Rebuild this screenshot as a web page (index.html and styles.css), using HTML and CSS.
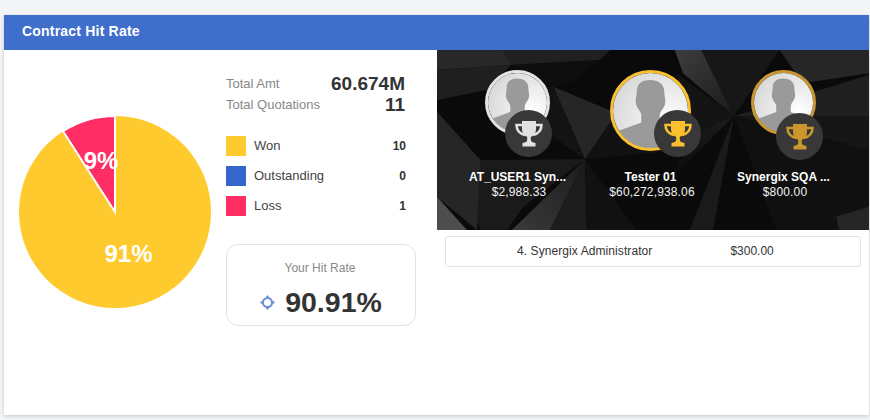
FILE: index.html
```html
<!DOCTYPE html>
<html lang="en">
<head>
<meta charset="UTF-8" />
<meta name="viewport" content="width=device-width, initial-scale=1.0"/>
<title>Contract Hit Rate</title>
<link rel="stylesheet" href="styles.css">
</head>
<body>
<svg class="defs" width="0" height="0">
  <symbol id="trophy" viewBox="0 0 28 27">
    <path d="M7 1H21V9C21 13.500 18 16 15.800 16.800V20C15.800 21.500 17.500 22.500 20.500 23V26.500H7.500V23C10.500 22.500 12.200 21.500 12.200 20V16.800C10 16 7 13.500 7 9Z" fill="currentColor"/>
    <path d="M8 5H1.500C1.500 10 4 13.500 10 15M20 5H26.500C26.500 10 24 13.500 18 15" fill="none" stroke="currentColor" stroke-width="2.500"/>
  </symbol>
  <symbol id="person" viewBox="0 0 65 65">
    <rect width="65" height="65" fill="url(#avatarbg)"/>
    <path d="M32 6C25 6 20.500 9 20.500 17C20.500 21 19 23 20 27C21 31 24 33 24.500 36V43L5 50V65H60V50L40.500 43V36C41 33 44 31 45 27C46 23 44.500 21 44.500 17C44.500 9 39 6 32 6Z" fill="#9a9a9a"/>
  </symbol>
  <defs>
    <radialGradient id="avatarbg" cx="0.75" cy="0.65" r="0.8">
      <stop offset="0" stop-color="#ffffff"/>
      <stop offset="1" stop-color="#d8d8d8"/>
    </radialGradient>
    <linearGradient id="bladeA" x1="0" y1="1" x2="1" y2="0">
      <stop offset="0" stop-color="#3a3a3a"/>
      <stop offset="1" stop-color="#1c1c1c"/>
    </linearGradient>
    <linearGradient id="bladeB" x1="0" y1="0" x2="1" y2="1">
      <stop offset="0" stop-color="#3e3e3e"/>
      <stop offset="1" stop-color="#1a1a1a"/>
    </linearGradient>
    <linearGradient id="fadeDark" x1="0" y1="0" x2="0" y2="1">
      <stop offset="0" stop-color="#1c1c1c"/>
      <stop offset="1" stop-color="#0a0a0a"/>
    </linearGradient>
  </defs>
</svg>

<div class="card">
  <header class="card-head">Contract Hit Rate</header>
  <div class="card-body">

    <div class="pie-col">
      <svg class="pie" width="192" height="192" viewBox="0 0 192 192">
        <circle cx="96" cy="96" r="96" fill="#ffca2e"/>
        <path d="M96 96L44.100 15.200A96 96 0 0 1 96 0Z" fill="#ff2d63" stroke="#fff" stroke-width="2"/>
        <text class="pie-label" x="82" y="53">9%</text>
        <text class="pie-label" x="109.500" y="146">91%</text>
      </svg>
    </div>

    <div class="stats-col">
      <div class="total-row"><span>Total Amt</span><b class="total-big">60.674M</b></div>
      <div class="total-row"><span>Total Quotations</span><b class="total-big">11</b></div>

      <div class="legend">
        <div class="legend-row"><i class="swatch won"></i><span>Won</span><b>10</b></div>
        <div class="legend-row"><i class="swatch outstanding"></i><span>Outstanding</span><b>0</b></div>
        <div class="legend-row"><i class="swatch loss"></i><span>Loss</span><b>1</b></div>
      </div>

      <div class="hit-box">
        <div class="hit-title">Your Hit Rate</div>
        <div class="hit-value">
          <svg class="hit-icon" width="15" height="15" viewBox="0 0 15 15">
            <circle cx="7.500" cy="7.500" r="4.500" fill="none" stroke="#6d8edb" stroke-width="2"/>
            <path d="M7.500 0L9.500 2.500H5.500ZM7.500 15L5.500 12.500H9.500ZM0 7.500L2.500 5.500V9.500ZM15 7.500L12.500 9.500V5.500Z" fill="#6d8edb"/>
          </svg>
          <b>90.91%</b>
        </div>
      </div>
    </div>

    <div class="rank-col">
      <div class="podium">
        <svg class="podium-bg" viewBox="0 0 1299 540" preserveAspectRatio="none">
          <rect width="1299" height="540" fill="#0a0a0a"/>
          <polygon points="0,0 200,0 222,45 0,60" fill="#282828"/>
          <polygon points="200,0 520,0 490,30 222,45" fill="#202020"/>
          <polygon points="0,60 222,45 150,120 0,150" fill="#1f1f1f"/>
          <polygon points="222,45 490,30 400,100 350,110" fill="#0e0e0e"/>
          <polygon points="350,110 540,190 445,328" fill="#262626"/>
          <polygon points="150,120 350,110 445,328" fill="#131313"/>
          <polygon points="0,185 130,330 445,328 260,470 210,540 130,540" fill="#1a1a1a"/>
          <polygon points="0,185 130,330 120,540 0,440" fill="#262626"/>
          <polygon points="0,440 90,540 0,540" fill="#4d4d4d"/>
          <polygon points="445,328 225,540 340,540" fill="url(#bladeA)"/>
          <polygon points="445,328 340,540 450,540" fill="#1c1c1c"/>
          <polygon points="445,328 450,540 600,540" fill="#111111"/>
          <polygon points="445,328 540,190 750,300" fill="#111111"/>
          <polygon points="715,0 795,0 893,198 740,70" fill="url(#bladeB)"/>
          <polygon points="795,0 1030,0 893,198" fill="#171717"/>
          <polygon points="720,70 893,198 780,250" fill="#141414"/>
          <polygon points="780,250 893,198 690,400" fill="url(#fadeDark)"/>
          <polygon points="893,198 760,540 830,540" fill="#1a1a1a"/>
          <polygon points="1030,0 1299,0 1299,70 1100,100" fill="#262626"/>
          <polygon points="893,198 1299,75 1299,200" fill="#1f1f1f"/>
          <polygon points="893,198 1299,200 1299,300" fill="#161616"/>
          <polygon points="893,198 1299,300 1299,540 1020,540" fill="#101010"/>
          <polygon points="1200,500 1299,470 1299,540 1210,540" fill="#262626"/>
        </svg>

        <div class="podium-item">
          <div class="avatar-area">
            <div class="avatar-wrap silver">
              <svg class="avatar" width="65" height="65"><use href="#person"/></svg>
              <span class="badge badge-first"><svg width="28" height="27"><use href="#trophy"/></svg></span>
            </div>
          </div>
          <div class="podium-name">AT_USER1 Syn...</div>
          <div class="podium-amt">$2,988.33</div>
        </div>

        <div class="podium-item">
          <div class="avatar-area">
            <div class="avatar-wrap gold">
              <svg class="avatar avatar-lg" width="81" height="81"><use href="#person"/></svg>
              <span class="badge badge-second"><svg width="28" height="27"><use href="#trophy"/></svg></span>
            </div>
          </div>
          <div class="podium-name">Tester 01</div>
          <div class="podium-amt">$60,272,938.06</div>
        </div>

        <div class="podium-item">
          <div class="avatar-area">
            <div class="avatar-wrap bronze">
              <svg class="avatar" width="65" height="65"><use href="#person"/></svg>
              <span class="badge badge-third"><svg width="28" height="27"><use href="#trophy"/></svg></span>
            </div>
          </div>
          <div class="podium-name">Synergix SQA ...</div>
          <div class="podium-amt">$800.00</div>
        </div>
      </div>

      <div class="rank-row">
        <span class="rank-name">4. Synergix Administrator</span>
        <span>$300.00</span>
      </div>
    </div>

  </div>
</div>
</body>
</html>
```

FILE: styles.css
```css
body {
  font-family: 'Liberation Sans', Arial, sans-serif;
  margin: 0;
  padding: 15px 1px 5px 4px;
  background-color: #f4f5f8;
  color: #333;
  overflow: hidden;
}
.defs {
  position: absolute;
}
.card {
  height: 400px;
  background: white;
  box-shadow: 0 1px 4px rgba(0,0,0,0.2);
}
.card-head {
  height: 35px;
  line-height: 33px;
  padding-left: 18px;
  background-color: #3f6ecb;
  color: white;
  font-size: 14px;
  font-weight: bold;
  letter-spacing: 0.2px;
}
.card-body {
  display: flex;
}

/* pie */
.pie-col {
  width: 207px;
  padding: 66px 0 0 15px;
}
.pie {
  display: block;
}
.pie-label {
  fill: white;
  font-size: 24px;
  font-weight: bold;
  text-anchor: middle;
}

/* totals and legend */
.stats-col {
  width: 190px;
  padding-top: 23px;
  margin-right: 21px;
}
.total-row {
  display: flex;
  justify-content: space-between;
  align-items: center;
  width: 179px;
  height: 21px;
  font-size: 13px;
  color: #888;
}
.total-big {
  font-size: 19px;
  color: #333;
}
.legend {
  width: 180px;
  margin-top: 21px;
}
.legend-row {
  display: flex;
  align-items: center;
  height: 20px;
  margin-bottom: 10px;
  font-size: 13px;
  color: #444;
}
.legend-row span {
  flex: 1;
  margin-left: 8px;
  padding-bottom: 1px;
}
.legend-row b {
  font-size: 12px;
  color: #333;
}
.swatch {
  width: 20px;
  height: 20px;
}
.won { background-color: #ffca2e; }
.outstanding { background-color: #3566cc; }
.loss { background-color: #ff2d63; }

.hit-box {
  box-sizing: border-box;
  height: 82px;
  margin-top: 28px;
  padding-top: 16px;
  border: 1px solid #e3e3e3;
  border-radius: 12px;
  text-align: center;
}
.hit-title {
  font-size: 12px;
  line-height: 14px;
  color: #888;
  padding-right: 2px;
}
.hit-value {
  display: flex;
  justify-content: center;
  align-items: center;
  gap: 10px;
  margin-top: 11px;
  font-size: 28.500px;
  line-height: 32px;
}

/* ranking */
.rank-col {
  width: 432px;
}
.podium {
  position: relative;
  display: grid;
  grid-template-columns: repeat(3, 133px);
  box-sizing: border-box;
  height: 180px;
  padding: 20px 0 0 14px;
  color: white;
  text-align: center;
  overflow: hidden;
}
.podium-bg {
  position: absolute;
  left: 0;
  top: 0;
  width: 100%;
  height: 100%;
}
.podium-item {
  position: relative;
}
.avatar-area {
  display: flex;
  justify-content: center;
  height: 99px;
}
.avatar-wrap {
  position: relative;
  height: 65px;
}
.avatar {
  display: block;
  box-sizing: border-box;
  border: 3px solid #ddd;
  border-radius: 50%;
}
.avatar-lg {
  height: 81px;
}
.silver .avatar { border-color: #e4e4e4; }
.gold .avatar { border-color: #fbc02d; }
.bronze .avatar { border-color: #c9962f; }
.badge {
  position: absolute;
  display: flex;
  justify-content: center;
  align-items: center;
  width: 47px;
  height: 47px;
  border-radius: 50%;
  background-color: #383838;
}
.badge-first { left: 20px; top: 40px; }
.badge-second { left: 44px; top: 40px; }
.badge-third { left: 25px; top: 43px; }
.silver .badge { color: #e2e2e2; }
.gold .badge { color: #fbc02d; }
.bronze .badge { color: #c9962f; }
.podium-name {
  font-size: 12px;
  font-weight: bold;
  line-height: 16px;
}
.podium-amt {
  font-size: 12px;
  line-height: 14px;
  letter-spacing: 0.15px;
  padding-left: 3px;
  color: #f2f2f2;
}
.rank-row {
  display: flex;
  gap: 78px;
  box-sizing: border-box;
  height: 31px;
  margin: 6px 8px 0;
  padding-left: 71px;
  border: 1px solid #e3e3e3;
  border-radius: 3px;
  font-size: 12px;
  line-height: 28px;
}
.rank-name {
  letter-spacing: 0.08px;
}
```
